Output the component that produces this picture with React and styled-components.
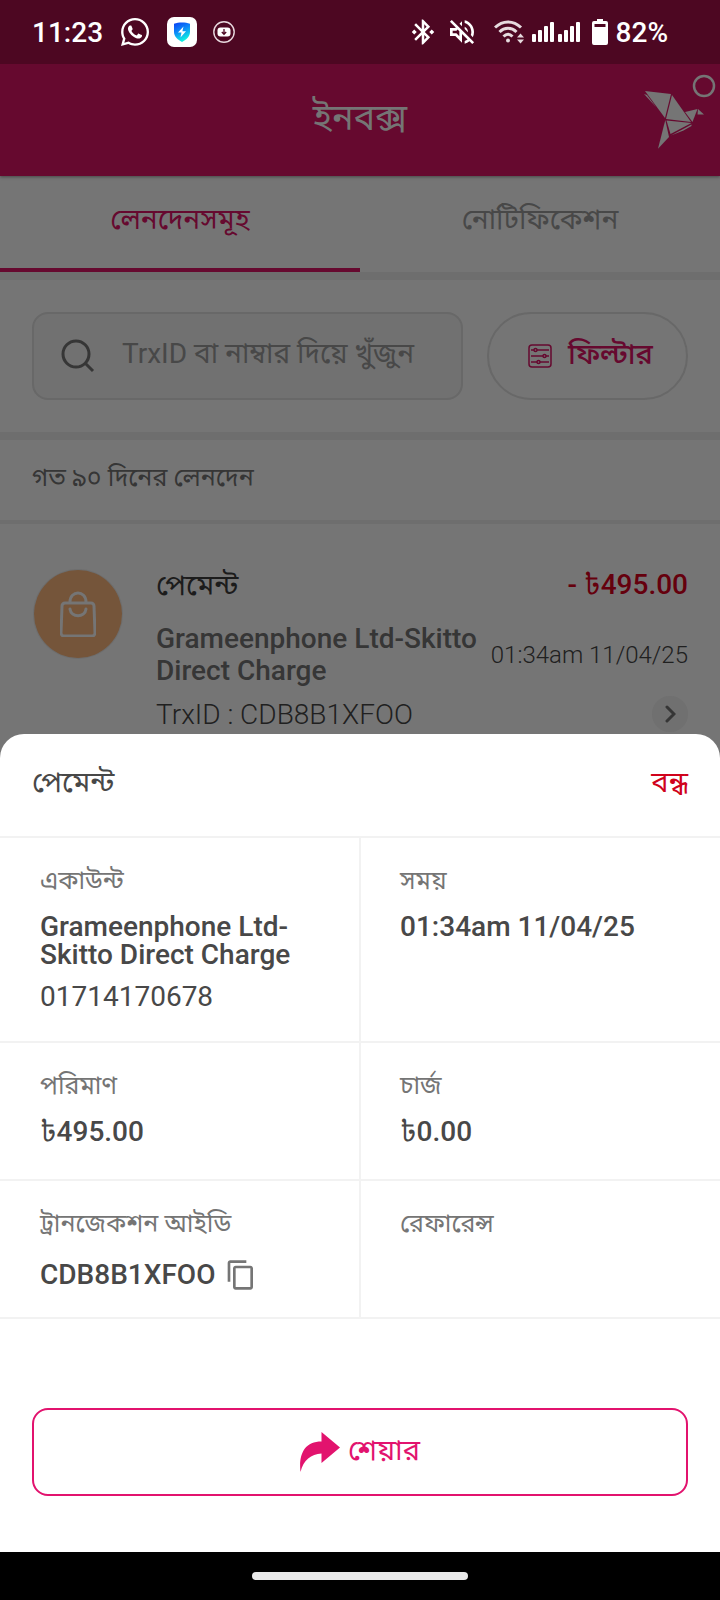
import React from "react";
import styled, { createGlobalStyle } from "styled-components";
import { FaWhatsapp } from "react-icons/fa";
import { MdBluetoothConnected, MdOutlineVolumeOff, MdContentCopy } from "react-icons/md";

const details = [
  {
    label: "একাউন্ট",
    value: "Grameenphone Ltd-Skitto Direct Charge",
    extra: "01714170678",
  },
  { label: "সময়", value: "01:34am 11/04/25" },
  { label: "পরিমাণ", value: <Money amount="495.00" /> },
  { label: "চার্জ", value: <Money amount="0.00" /> },
  { label: "ট্রানজেকশন আইডি", value: "CDB8B1XFOO", copy: true },
  { label: "রেফারেন্স", value: "" },
];

function Money({ amount }) {
  return (
    <span>
      <Taka>৳</Taka>
      {amount}
    </span>
  );
}

function StatusBar() {
  return (
    <Status>
      <StatusGroup>
        <span>11:23</span>
        <FaWhatsapp size={32} />
        <svg width="30" height="30" viewBox="0 0 30 30">
          <defs>
            <linearGradient id="shield" x1="0" y1="0" x2="0.4" y2="1">
              <stop offset="0" stopColor="#0a3cf5" />
              <stop offset="0.5" stopColor="#0c8cf8" />
              <stop offset="1" stopColor="#10f0e0" />
            </linearGradient>
          </defs>
          <rect width="30" height="30" rx="7" fill="#fff" />
          <path d="M15 5.500c3 0 5.500.3 8 1.200v8.300c0 4.500-3.500 7.500-8 10-4.500-2.500-8-5.500-8-10V6.700c2.500-.9 5-1.200 8-1.200z" fill="url(#shield)" />
          <path d="M16.500 9.500l-5.500 6h3.500l-1 5 5.500-6.300h-3.600z" fill="#fff" />
        </svg>
        <svg width="22" height="22" viewBox="0 0 22 22">
          <circle cx="11" cy="11" r="10.200" fill="none" stroke="#e8d8de" strokeWidth="1.400" />
          <rect x="4.500" y="6.500" width="13" height="9" rx="3" fill="#fff" />
          <path d="M11 8v5M8.800 11l2.200 2.300 2.200-2.300" fill="none" stroke="#4d0722" strokeWidth="1.300" />
        </svg>
      </StatusGroup>
      <StatusGroup $tight>
        <MdBluetoothConnected size={30} />
        <MuteIcon size={32} />
        <svg width="30" height="24" viewBox="0 0 30 24" fill="none" stroke="#e6dade" strokeWidth="3">
          <path d="M1 7.500C8.500 0 19.500 0 27 7.500M5.500 12c5-5 12-5 17 0M9.500 16.500c3-3 6-3 9 0" />
          <circle cx="14" cy="20.500" r="2" fill="#e6dade" stroke="none" />
          <path d="M23 17.500l3.500-4 3.500 4zM23 19.500l3.500 4 3.500-4z" fill="#e6dade" stroke="none" />
        </svg>
        <svg width="48" height="20" viewBox="0 0 48 20" fill="#fff">
          <rect x="0" y="12" width="4" height="8" rx="1" />
          <rect x="6" y="8" width="4" height="12" rx="1" />
          <rect x="12" y="4" width="4" height="16" rx="1" />
          <rect x="18" y="0" width="4" height="20" rx="1" />
          <rect x="26" y="12" width="4" height="8" rx="1" />
          <rect x="32" y="8" width="4" height="12" rx="1" />
          <rect x="38" y="4" width="4" height="16" rx="1" />
          <rect x="44" y="0" width="4" height="20" rx="1" />
        </svg>
        <BatteryIcon width="16" height="26" viewBox="0 0 16 26">
          <path d="M5 0h6v2h3a2 2 0 0 1 2 2v20a2 2 0 0 1-2 2H2a2 2 0 0 1-2-2V4a2 2 0 0 1 2-2h3z" fill="#fff" />
          <path d="M2.500 5h11v3h-11z" fill="#4d0722" />
        </BatteryIcon>
        <span>82%</span>
      </StatusGroup>
    </Status>
  );
}

function BirdLogo() {
  return (
    <svg width="72" height="76" viewBox="0 0 72 76" fill="#757575">
      <path d="M1 17l26 3-6 24z" />
      <path d="M0 20l3 1 9 12z" />
      <path d="M28 21l19 27-25-3z" />
      <path d="M22.500 46.500l25 2.500-21 11z" />
      <path d="M21.300 46l3.700 17-11 11.700z" />
      <path d="M27 61.500l20.500-11v1.500l-8 4.500z" />
      <path d="M41 38l12.500-3-5 13z" />
      <path d="M54 35l6 5.500h-6.500z" />
      <circle cx="60" cy="12" r="10" fill="none" stroke="#757575" strokeWidth="2.500" />
    </svg>
  );
}

function Inbox() {
  return (
    <Page>
      <Header>
        <h1>ইনবক্স</h1>
        <Logo>
          <BirdLogo />
        </Logo>
      </Header>
      <Tabs>
        <Tab $active>লেনদেনসমূহ</Tab>
        <Tab>নোটিফিকেশন</Tab>
      </Tabs>
      <SearchRow>
        <SearchBox>
          <svg width="34" height="34" viewBox="0 0 34 34" fill="none" stroke="#363636" strokeWidth="3">
            <circle cx="15" cy="15" r="13" />
            <path d="M24 24l8 8" />
          </svg>
          <input aria-label="TrxID বা নাম্বার দিয়ে খুঁজুন" placeholder="TrxID বা নাম্বার দিয়ে খুঁজুন" />
        </SearchBox>
        <FilterButton>
          <svg width="24" height="24" viewBox="0 0 24 24" fill="none" stroke="#66092f" strokeWidth="1.500">
            <rect x="1" y="1" width="22" height="22" rx="3" />
            <path d="M3 6h3M9 6h12M3 12h12M18 12h3M3 18h6M12 18h9" />
            <circle cx="7.500" cy="6" r="1.500" />
            <circle cx="16.500" cy="12" r="1.500" />
            <circle cx="10.500" cy="18" r="1.500" />
          </svg>
          ফিল্টার
        </FilterButton>
      </SearchRow>
      <SectionTitle>গত ৯০ দিনের লেনদেন</SectionTitle>
      <Transaction>
        <Badge>
          <svg width="36" height="46" viewBox="0 0 36 46" fill="none" stroke="#757575" strokeWidth="3" strokeLinecap="round">
            <path d="M5 12h26a3 3 0 0 1 3 3l1 27a3 3 0 0 1-3 3H4a3 3 0 0 1-3-3l1-27a3 3 0 0 1 3-3z" />
            <path d="M10 11c0-12 16-12 16 0M10 18c1 9 15 9 16 0" />
          </svg>
        </Badge>
        <TransactionBody>
          <TransactionTop>
            <strong>পেমেন্ট</strong>
            <Amount>
              - <Money amount="495.00" />
            </Amount>
          </TransactionTop>
          <TransactionMiddle>
            <Merchant>Grameenphone Ltd-Skitto Direct Charge</Merchant>
            <time>01:34am 11/04/25</time>
          </TransactionMiddle>
          <TransactionBottom>
            <span>TrxID : CDB8B1XFOO</span>
            <NextButton aria-label="বিস্তারিত">
              <svg width="12" height="18" viewBox="0 0 12 18" fill="none" stroke="#363636" strokeWidth="3" strokeLinecap="round">
                <path d="M3 2l7 7-7 7" />
              </svg>
            </NextButton>
          </TransactionBottom>
        </TransactionBody>
      </Transaction>
    </Page>
  );
}

function PaymentSheet() {
  return (
    <Sheet>
      <SheetHeader>
        <h2>পেমেন্ট</h2>
        <CloseButton>বন্ধ</CloseButton>
      </SheetHeader>
      <DetailGrid>
        {details.map((item) => (
          <Cell key={item.label}>
            <dt>{item.label}</dt>
            <Value $tall={item.copy}>
              {item.value}
              {item.copy && (
                <CopyButton aria-label="কপি">
                  <MdContentCopy size={32} />
                </CopyButton>
              )}
            </Value>
            {item.extra && <Extra>{item.extra}</Extra>}
          </Cell>
        ))}
      </DetailGrid>
      <ShareButton>
        <svg width="40" height="40" viewBox="0 0 40 40" fill="#e2136e">
          <path d="M21.500 0L40 15.500 21.500 31v-9.500C11 22 3.500 28 .500 40-1.500 23 4 9.500 21.500 9.500z" />
        </svg>
        শেয়ার
      </ShareButton>
    </Sheet>
  );
}

export default function App() {
  return (
    <Screen>
      <GlobalStyle />
      <StatusBar />
      <Inbox />
      <PaymentSheet />
      <NavBar>
        <NavPill />
      </NavBar>
    </Screen>
  );
}

const GlobalStyle = createGlobalStyle`
  * {
    box-sizing: border-box;
  }
  body, h1, h2, dl, dt, dd {
    margin: 0;
  }
  body, button, input {
    font-family: Roboto, "Noto Sans Bengali", "Noto Sans", sans-serif;
  }
  button {
    border: none;
    padding: 0;
    background: none;
    cursor: pointer;
  }
  svg {
    display: block;
    flex: none;
  }
`;

const Taka = styled.span`
  font-weight: 400;
`;

const Screen = styled.div`
  display: flex;
  flex-direction: column;
  height: 100vh;
  overflow: hidden;
  background: #757575;
`;

const Status = styled.div`
  flex: none;
  display: flex;
  justify-content: space-between;
  align-items: center;
  height: 64px;
  padding: 0 52px 0 32px;
  background: #4d0722;
  color: #fff;
  font-size: 28px;
  font-weight: 500;
`;

const StatusGroup = styled.div`
  display: flex;
  align-items: center;
  gap: ${(props) => (props.$tight ? "8px" : "16px")};
`;

const MuteIcon = styled(MdOutlineVolumeOff)`
  margin-right: 8px;
`;

const BatteryIcon = styled.svg`
  margin-left: 4px;
`;

const Page = styled.main`
  flex: 1;
  min-height: 0;
  overflow: hidden;
`;

const Header = styled.header`
  position: relative;
  display: flex;
  align-items: center;
  justify-content: center;
  height: 112px;
  padding-bottom: 4px;
  background: #66092f;
  box-shadow: 0 1px 3px rgba(0, 0, 0, 0.4);
  h1 {
    color: #757575;
    font-size: 36px;
    font-weight: 400;
    line-height: 48px;
  }
`;

const Logo = styled.div`
  position: absolute;
  top: 10px;
  right: 4px;
`;

const Tabs = styled.nav`
  display: grid;
  grid-template-columns: 1fr 1fr;
  border-bottom: 8px solid #6e6e6e;
`;

const Tab = styled.button`
  height: 96px;
  padding-bottom: 2px;
  border-bottom: 4px solid ${(props) => (props.$active ? "#66092f" : "transparent")};
  color: ${(props) => (props.$active ? "#66092f" : "#484848")};
  font-size: 28px;
`;

const SearchRow = styled.div`
  display: flex;
  gap: 24px;
  padding: 32px;
  border-bottom: 8px solid #6e6e6e;
`;

const SearchBox = styled.label`
  flex: 1;
  min-width: 0;
  display: flex;
  align-items: center;
  gap: 27px;
  height: 88px;
  padding: 0 24px 0 27px;
  border: 2px solid #686868;
  border-radius: 16px;
  background: #717171;
  input {
    flex: 1;
    min-width: 0;
    height: 48px;
    padding: 0 0 6px;
    border: none;
    background: none;
    font-size: 28px;
  }
  input::placeholder {
    color: #484848;
    opacity: 1;
  }
`;

const FilterButton = styled.button`
  display: flex;
  align-items: center;
  justify-content: center;
  gap: 16px;
  width: 201px;
  height: 88px;
  padding-left: 6px;
  border: 2px solid #686868;
  border-radius: 44px;
  color: #66092f;
  font-size: 29px;
  font-weight: 500;
`;

const SectionTitle = styled.h2`
  padding: 20px 32px 24px;
  border-bottom: 4px solid #6e6e6e;
  color: #363636;
  font-size: 25px;
  font-weight: 400;
  line-height: 36px;
`;

const Transaction = styled.article`
  display: flex;
  gap: 34px;
  padding: 40px 32px 24px 34px;
`;

const Badge = styled.div`
  flex: none;
  display: flex;
  align-items: center;
  justify-content: center;
  width: 88px;
  height: 88px;
  margin-top: 6px;
  border-radius: 50%;
  background: #75553a;
  box-shadow: 0 0 0 1px #6e6e6e;
`;

const TransactionBody = styled.div`
  flex: 1;
  min-width: 0;
`;

const TransactionTop = styled.div`
  display: flex;
  justify-content: space-between;
  font-size: 28px;
  line-height: 42px;
  strong {
    color: #1c1c1c;
    font-size: 29px;
    font-weight: 400;
  }
`;

const Amount = styled.span`
  color: #65000d;
  font-weight: 500;
`;

const TransactionMiddle = styled.div`
  display: flex;
  align-items: center;
  justify-content: space-between;
  margin-top: 17px;
  time {
    flex: none;
    color: #202020;
    font-size: 24px;
    font-weight: 300;
  }
`;

const Merchant = styled.div`
  flex: 1;
  color: #363636;
  font-size: 28px;
  font-weight: 500;
  line-height: 32px;
`;

const TransactionBottom = styled.div`
  display: flex;
  align-items: center;
  justify-content: space-between;
  margin-top: 9px;
  color: #202020;
  font-size: 28px;
  font-weight: 300;
`;

const NextButton = styled.button`
  display: flex;
  align-items: center;
  justify-content: center;
  width: 36px;
  height: 36px;
  border-radius: 50%;
  background: #707070;
`;

const Sheet = styled.section`
  position: relative;
  flex: none;
  margin-top: -24px;
  padding-bottom: 56px;
  border-radius: 24px 24px 0 0;
  background: #fff;
`;

const SheetHeader = styled.div`
  display: flex;
  align-items: center;
  justify-content: space-between;
  height: 104px;
  padding: 0 32px 2px;
  border-bottom: 2px solid #f2f2f2;
  h2 {
    color: #484848;
    font-size: 29px;
    font-weight: 400;
  }
`;

const CloseButton = styled.button`
  color: #d0021b;
  font-size: 29px;
  font-weight: 400;
`;

const DetailGrid = styled.dl`
  display: grid;
  grid-template-columns: 1fr 1fr;
`;

const Cell = styled.div`
  min-height: 138px;
  padding: 25px 40px 26px;
  border-bottom: 2px solid #f2f2f2;
  color: #484848;
  font-size: 28px;
  &:nth-child(odd) {
    border-right: 1px solid #f2f2f2;
  }
  &:nth-child(even) {
    padding-left: 39px;
    border-left: 1px solid #f2f2f2;
  }
  dt {
    color: #757575;
    font-size: 25px;
    line-height: 36px;
  }
`;

const Value = styled.dd`
  display: flex;
  align-items: center;
  gap: 10px;
  margin-top: ${(props) => (props.$tall ? "17px" : "14px")};
  font-weight: 500;
  line-height: 28px;
`;

const Extra = styled.dd`
  margin-top: 10px;
  line-height: 36px;
`;

const CopyButton = styled.button`
  color: #757575;
`;

const ShareButton = styled.button`
  display: flex;
  align-items: center;
  justify-content: center;
  gap: 8px;
  width: calc(100% - 64px);
  height: 88px;
  margin: 89px 32px 0;
  border: 2px solid #e2136e;
  border-radius: 16px;
  color: #e2136e;
  font-size: 29px;
  font-weight: 400;
`;

const NavBar = styled.div`
  flex: none;
  display: flex;
  align-items: center;
  justify-content: center;
  height: 48px;
  background: #000;
`;

const NavPill = styled.div`
  width: 30%;
  height: 8px;
  border-radius: 4px;
  background: #eaeaea;
`;
